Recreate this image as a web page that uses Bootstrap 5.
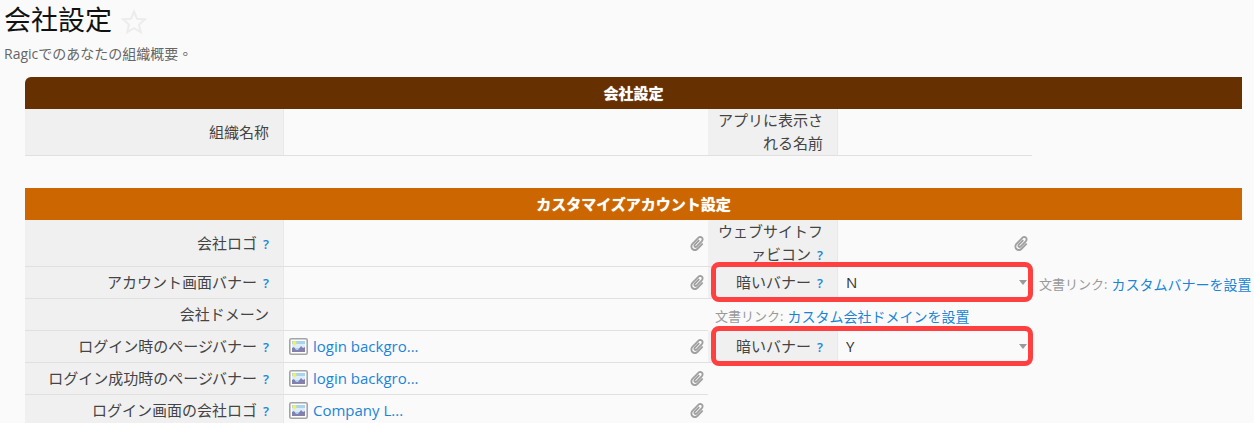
<!DOCTYPE html>
<html lang="zh-Hant">
<head>
<meta charset="utf-8">
<meta name="viewport" content="width=device-width, initial-scale=1">
<title>会社設定</title>
<link href="https://cdn.jsdelivr.net/npm/bootstrap@5.3.0/dist/css/bootstrap.min.css" rel="stylesheet">
<style>
body{background:#fafafa;color:#444;font-family:"Open Sans","Noto Sans CJK TC",sans-serif;font-size:15px;line-height:23px}
a{color:#1a85d6;text-decoration:none}
.page-title{font-size:27px;line-height:40px;color:#111}
.star-btn{line-height:0}
.intro{font-size:14px;line-height:20px;color:#666}
.sheet{margin:13px 12px 0 25px}
.band{height:32px;font-size:15px;font-weight:700;line-height:32px;color:#fff;text-align:center;margin:0;text-shadow:0 0 1px #fff}
.band-dark{background:#663000;border-top-left-radius:6px}
.band-orange{background:#cc6600}
.fields{display:grid;grid-template-columns:259px minmax(0,1fr) 130px 194px 210px;grid-auto-rows:minmax(32px,auto)}
.name-cell{background:#f0f0f0;border-right:1px solid #e8e8e8;border-bottom:1px solid #e0e0e0;padding:0 14px 0 10px;display:flex;align-items:center;justify-content:flex-end;text-align:right}
.tall{height:47px}
.value-cell{border-bottom:1px solid #e0e0e0;display:flex;align-items:center;min-width:0;padding:0 4px 0 5px}
.value-cell input,.value-cell select{flex:1;min-width:0;width:100%;border:0;background:transparent;color:#333;padding:0 0 0 3px;outline:0;appearance:none}
.help{font-size:13px;font-weight:600;margin-left:6px;padding-top:2px}
.clip{line-height:0;color:#a0a0a0}
.pair{grid-column:3 / span 2;display:grid;grid-template-columns:130px 1fr;position:relative}
.pair::after{content:"";position:absolute;inset:-5px -1px -3px 3px;border:5px solid #ff4040;border-radius:8px;pointer-events:none;z-index:1}
.hint{font-size:13px;color:#999;white-space:nowrap;padding:2px 0 0 7px;display:flex;align-items:center;gap:4px}
.hint a{font-size:14px}
.c1{grid-column:1}
.wide{grid-column:3 / span 3}
.arrow{border:4px solid transparent;border-top:5px solid #999;border-bottom:0;pointer-events:none;margin-right:1px}
.file-link{margin-left:5px}
</style>
</head>
<body>
<svg class="d-none" aria-hidden="true">
<symbol id="clip" viewBox="0 0 448 512"><path fill="currentColor" d="M43.246 466.142c-58.43-60.289-57.341-157.511 1.386-217.581L254.392 34c44.316-45.332 116.351-45.336 160.671 0 43.89 44.894 43.943 117.329 0 162.276L232.214 383.128c-29.855 30.537-78.633 30.111-107.982-.998-28.275-29.97-27.368-77.473 1.452-106.953l143.743-146.835c6.182-6.314 16.312-6.422 22.626-.241l22.861 22.379c6.315 6.182 6.422 16.312.241 22.626L171.427 319.927c-4.932 5.045-5.236 13.428-.648 18.292 4.372 4.634 11.245 4.711 15.688.165l182.849-186.851c19.613-20.062 19.613-52.725-.011-72.798-19.189-19.627-49.957-19.637-69.154 0L90.39 293.295c-34.763 35.56-35.299 93.12-1.191 128.313 34.01 35.093 88.985 35.137 123.058.286l172.06-175.999c6.177-6.319 16.307-6.433 22.626-.256l22.877 22.364c6.319 6.177 6.434 16.307.256 22.626l-172.06 175.998c-59.576 60.938-155.943 60.216-214.77-.485z"/></symbol>
<symbol id="pic" viewBox="0 0 19 17"><rect x=".8" y=".8" width="17.400" height="15.400" rx="1.500" fill="#fff" stroke="#a4a4a4" stroke-width="1.600"/><path fill="#a9d3ee" d="M3 3h13v11H3z"/><path fill="#dceff8" d="M3 6h13v4H3z"/><circle cx="5.500" cy="5" r="2" fill="#f3ef5a"/><path fill="#8480ae" d="M3 14v-4l2-1 2 3h2l3-4 2 2 2-1v5z"/></symbol>
</svg>
<header>
<div class="d-flex align-items-center ps-1">
<h1 class="page-title fw-normal m-0">会社設定</h1>
<button type="button" class="star-btn border-0 bg-transparent p-0 ms-2 pt-1" aria-label="お気に入り"><svg width="28" height="28" viewBox="0 0 28 28"><path d="M14 3.500l3 7.200 8 .7-6 5.200 1.800 7.600L14 20.200l-6.800 4L9 16.600l-6-5.200 8-.7z" fill="none" stroke="#ececec" stroke-width="2"/></svg></button>
</div>
<p class="intro ps-1 m-0 pt-1">Ragicでのあなたの組織概要。</p>
</header>
<main class="sheet">
<section>
<h2 class="band band-dark">会社設定</h2>
<div class="fields">
<div class="name-cell tall"><label for="org">組織名称</label></div>
<div class="value-cell"><input id="org" type="text"></div>
<div class="name-cell tall"><label for="app">アプリに表示される名前</label></div>
<div class="value-cell"><input id="app" type="text"></div>
</div>
</section>
<section class="mt-4 pt-2">
<h2 class="band band-orange">カスタマイズアカウント設定</h2>
<div class="fields">
<div class="name-cell tall"><label for="logo">会社ロゴ</label><a class="help" href="#">?</a></div>
<div class="value-cell"><input id="logo" type="text"><button type="button" class="clip border-0 bg-transparent p-0" aria-label="添付"><svg width="14" height="15"><use href="#clip"/></svg></button></div>
<div class="name-cell tall"><div><label class="d-inline" for="fav">ウェブサイトファビコン</label><a class="help" href="#">?</a></div></div>
<div class="value-cell"><input id="fav" type="text"><button type="button" class="clip border-0 bg-transparent p-0" aria-label="添付"><svg width="14" height="15"><use href="#clip"/></svg></button></div>

<div class="name-cell c1"><label for="banner">アカウント画面バナー</label><a class="help" href="#">?</a></div>
<div class="value-cell"><input id="banner" type="text"><button type="button" class="clip border-0 bg-transparent p-0" aria-label="添付"><svg width="14" height="15"><use href="#clip"/></svg></button></div>
<div class="pair"><div class="name-cell"><label for="dark1">暗いバナー</label><a class="help" href="#">?</a></div><div class="value-cell"><select id="dark1"><option>N</option><option>Y</option></select><span class="arrow"></span></div></div>
<div class="hint"><span>文書リンク:</span><a href="#">カスタムバナーを設置</a></div>

<div class="name-cell c1"><label for="domain">会社ドメーン</label></div>
<div class="value-cell"><input id="domain" type="text"></div>
<div class="hint wide"><span>文書リンク:</span><a href="#">カスタム会社ドメインを設置</a></div>

<div class="name-cell c1"><span>ログイン時のページバナー</span><a class="help" href="#">?</a></div>
<div class="value-cell"><svg width="19" height="17"><use href="#pic"/></svg><a class="file-link me-auto" href="#">login backgro...</a><button type="button" class="clip border-0 bg-transparent p-0" aria-label="添付"><svg width="14" height="15"><use href="#clip"/></svg></button></div>
<div class="pair"><div class="name-cell"><label for="dark2">暗いバナー</label><a class="help" href="#">?</a></div><div class="value-cell"><select id="dark2"><option>Y</option><option>N</option></select><span class="arrow"></span></div></div>

<div class="name-cell c1"><span>ログイン成功時のページバナー</span><a class="help" href="#">?</a></div>
<div class="value-cell"><svg width="19" height="17"><use href="#pic"/></svg><a class="file-link me-auto" href="#">login backgro...</a><button type="button" class="clip border-0 bg-transparent p-0" aria-label="添付"><svg width="14" height="15"><use href="#clip"/></svg></button></div>

<div class="name-cell c1"><span>ログイン画面の会社ロゴ</span><a class="help" href="#">?</a></div>
<div class="value-cell"><svg width="19" height="17"><use href="#pic"/></svg><a class="file-link me-auto" href="#">Company L...</a><button type="button" class="clip border-0 bg-transparent p-0" aria-label="添付"><svg width="14" height="15"><use href="#clip"/></svg></button></div>
</div>
</section>
</main>
<script src="https://cdn.jsdelivr.net/npm/bootstrap@5.3.0/dist/js/bootstrap.bundle.min.js"></script>
</body>
</html>
